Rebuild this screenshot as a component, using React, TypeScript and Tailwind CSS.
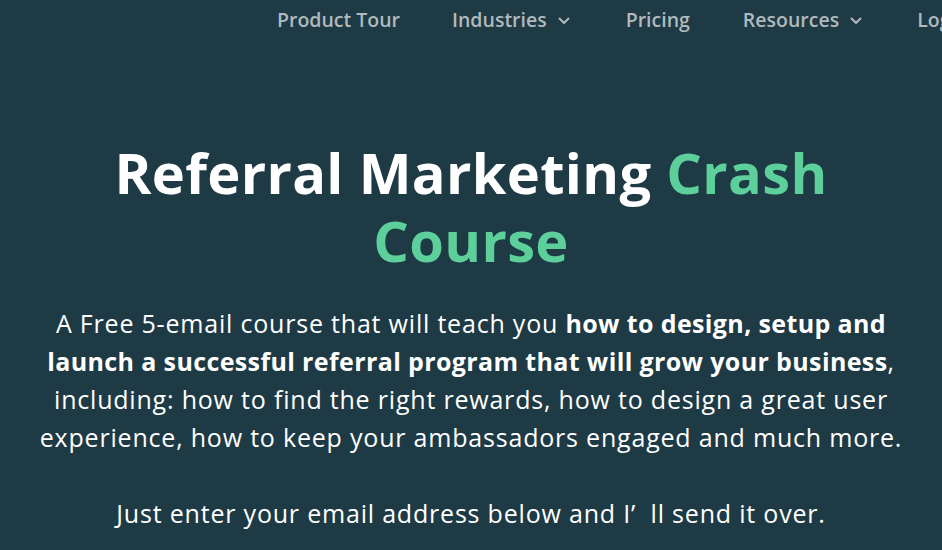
import React from "react";

function Chevron() {
  return (
    <svg width="12" height="8" viewBox="0 0 12 8" fill="none" className="ml-[11px] mt-[2px]">
      <path d="M1.5 1.5L6 6L10.5 1.5" stroke="currentColor" strokeWidth="2" strokeLinecap="round" strokeLinejoin="round" />
    </svg>
  );
}

export default function App() {
  const font = { fontFamily: '"Open Sans", "Noto Sans", sans-serif' };
  return (
    <div className="w-[942px] h-[550px] overflow-hidden bg-[#1e3a45]" style={font}>
      <nav className="flex h-[40px] items-center whitespace-nowrap pl-[277px] text-[19.5px] font-semibold text-[#b0b9bc]">
        <span>Product Tour</span>
        <span className="ml-[52px] flex items-center">Industries<Chevron /></span>
        <span className="ml-[56px]">Pricing</span>
        <span className="ml-[53px] flex items-center">Resources<Chevron /></span>
        <span className="ml-[55px]">Login</span>
      </nav>
      <div className="flex flex-col items-center pt-[98px] text-center">
        <h1 className="text-[56px] font-bold leading-[68px] tracking-[0.006em] text-white w-[760px]">
          Referral Marketing <span className="text-[#5ccf9b]">Crash Course</span>
        </h1>
        <p className="mt-[30px] w-[880px] text-[25px] leading-[38px] tracking-[0.032em] text-white">
          A Free 5-email course that will teach you <b className="font-bold tracking-[0.015em]">how to design, setup and launch a successful referral program that will grow your business</b>, including: how to find the right rewards, how to design a great user experience, how to keep your ambassadors engaged and much more.
        </p>
        <p className="mt-[38px] text-[25px] leading-[38px] tracking-[0.032em] text-white">
          Just enter your email address below and I’&nbsp;&nbsp;ll send it over.
        </p>
      </div>
    </div>
  );
}
